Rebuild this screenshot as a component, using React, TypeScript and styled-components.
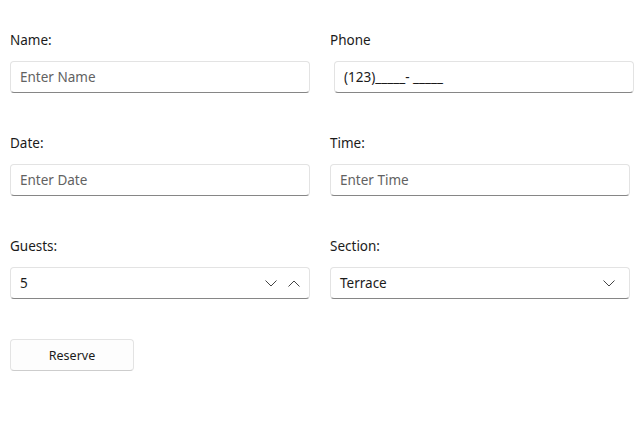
import { createGlobalStyle } from "styled-components";
import styled from "styled-components";

const GlobalStyle = createGlobalStyle`
  body {
    margin: 0;
    background: #ffffff;
    font-family: "Segoe UI", "Noto Sans", "Open Sans", sans-serif;
    color: #1b1b1b;
  }
`;

const Page = styled.div`
  width: 644px;
  height: 431px;
  box-sizing: border-box;
  padding: 30px 14px 0 10px;
`;

const Grid = styled.div`
  display: grid;
  grid-template-columns: 300px 300px;
  column-gap: 20px;
  row-gap: 40px;
`;

const Field = styled.div<{ $shift?: number }>`
  display: flex;
  flex-direction: column;
  gap: 11px;
  margin-left: ${(p) => p.$shift || 0}px;
  margin-right: ${(p) => -(p.$shift || 0)}px;
`;

const Label = styled.label<{ $shift?: number }>`
  font-size: 13.5px;
  line-height: 20px;
  height: 20px;
  color: #1b1b1b;
  margin-left: ${(p) => -(p.$shift || 0)}px;
`;

const Box = styled.div<{ $pad?: number }>`
  display: flex;
  align-items: center;
  height: 32px;
  box-sizing: border-box;
  border: 1px solid #e3e3e3;
  border-bottom: 1px solid #868686;
  border-radius: 4px;
  background: #ffffff;
  padding: 0 ${(p) => p.$pad ?? 9}px 0 9px;
`;

const Input = styled.input`
  flex: 1;
  min-width: 0;
  border: none;
  outline: none;
  background: transparent;
  font-family: inherit;
  font-size: 13.5px;
  color: #1b1b1b;
  padding: 0;

  &::placeholder {
    color: #626262;
  }
`;

const Value = styled.span`
  flex: 1;
  font-size: 13.5px;
  color: #1b1b1b;
`;

const Chevrons = styled.div`
  display: flex;
  align-items: center;
  gap: 11px;
`;

const ChevronIcon = ({ up }: { up?: boolean }) => (
  <svg width="12" height="7" viewBox="0 0 12 7" fill="none">
    <path
      d={up ? "M0.5 6.5 L6 1 L11.5 6.5" : "M0.5 0.5 L6 6 L11.5 0.5"}
      stroke="#444"
      strokeWidth="1"
    />
  </svg>
);

const ButtonRow = styled.div`
  margin-top: 40px;
`;

const Button = styled.button`
  width: 124px;
  height: 32px;
  box-sizing: border-box;
  border: 1px solid #e3e3e3;
  border-bottom-color: #cdcdcd;
  border-radius: 4px;
  background: #fdfdfd;
  font-family: inherit;
  font-size: 12.5px;
  color: #1b1b1b;
  cursor: pointer;
`;

export default function App() {
  return (
    <Page>
      <GlobalStyle />
      <Grid>
        <Field>
          <Label>Name:</Label>
          <Box>
            <Input placeholder="Enter Name" />
          </Box>
        </Field>
        <Field $shift={4}>
          <Label $shift={4}>Phone</Label>
          <Box>
            <Input defaultValue="(123)_____- _____" />
          </Box>
        </Field>

        <Field>
          <Label>Date:</Label>
          <Box>
            <Input placeholder="Enter Date" />
          </Box>
        </Field>
        <Field>
          <Label>Time:</Label>
          <Box>
            <Input placeholder="Enter Time" />
          </Box>
        </Field>

        <Field>
          <Label>Guests:</Label>
          <Box>
            <Value>5</Value>
            <Chevrons>
              <ChevronIcon />
              <ChevronIcon up />
            </Chevrons>
          </Box>
        </Field>
        <Field>
          <Label>Section:</Label>
          <Box $pad={14}>
            <Value>Terrace</Value>
            <ChevronIcon />
          </Box>
        </Field>
      </Grid>
      <ButtonRow>
        <Button>Reserve</Button>
      </ButtonRow>
    </Page>
  );
}
